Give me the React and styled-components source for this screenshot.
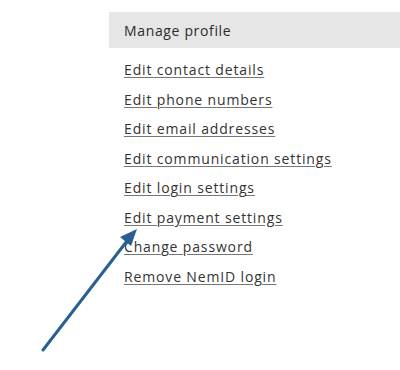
import React from "react";
import styled, { createGlobalStyle } from "styled-components";

const Global = createGlobalStyle`
  body {
    margin: 0;
    background: #fff;
    font-family: "Open Sans", "Liberation Sans", sans-serif;
  }
`;

const Page = styled.div`
  position: relative;
  width: 400px;
  height: 370px;
  overflow: hidden;
`;

const Panel = styled.div`
  margin-left: 109px;
  padding-top: 12px;
`;

const Header = styled.div`
  height: 36px;
  display: flex;
  align-items: center;
  padding-left: 15px;
  background: #e6e6e6;
  color: #2b2b2b;
  font-size: 14px;
  letter-spacing: 0.65px;
`;

const List = styled.ul`
  list-style: none;
  margin: 0;
  padding: 7px 0 0 15px;
`;

const Item = styled.li`
  height: 29.5px;
  display: flex;
  align-items: center;
`;

const Link = styled.a`
  color: #333;
  font-size: 14px;
  letter-spacing: 0.85px;
  text-decoration: underline;
  text-underline-offset: 2px;
  text-decoration-color: #777;
  cursor: pointer;
`;

const Arrow = styled.svg`
  position: absolute;
  left: 0;
  top: 0;
  pointer-events: none;
`;

const links = [
  "Edit contact details",
  "Edit phone numbers",
  "Edit email addresses",
  "Edit communication settings",
  "Edit login settings",
  "Edit payment settings",
  "Change password",
  "Remove NemID login",
];

const App = () => (
  <Page>
    <Global />
    <Panel>
      <Header>Manage profile</Header>
      <List>
        {links.map((l) => (
          <Item key={l}>
            <Link>{l}</Link>
          </Item>
        ))}
      </List>
    </Panel>
    <Arrow width="400" height="370" viewBox="0 0 400 370">
      <line x1="43" y1="350" x2="127" y2="241" stroke="#2a5f94" strokeWidth="3" strokeLinecap="round" />
      <polygon points="137,229 120,237 131,246" fill="#2a5f94" />
    </Arrow>
  </Page>
);

export default App;
